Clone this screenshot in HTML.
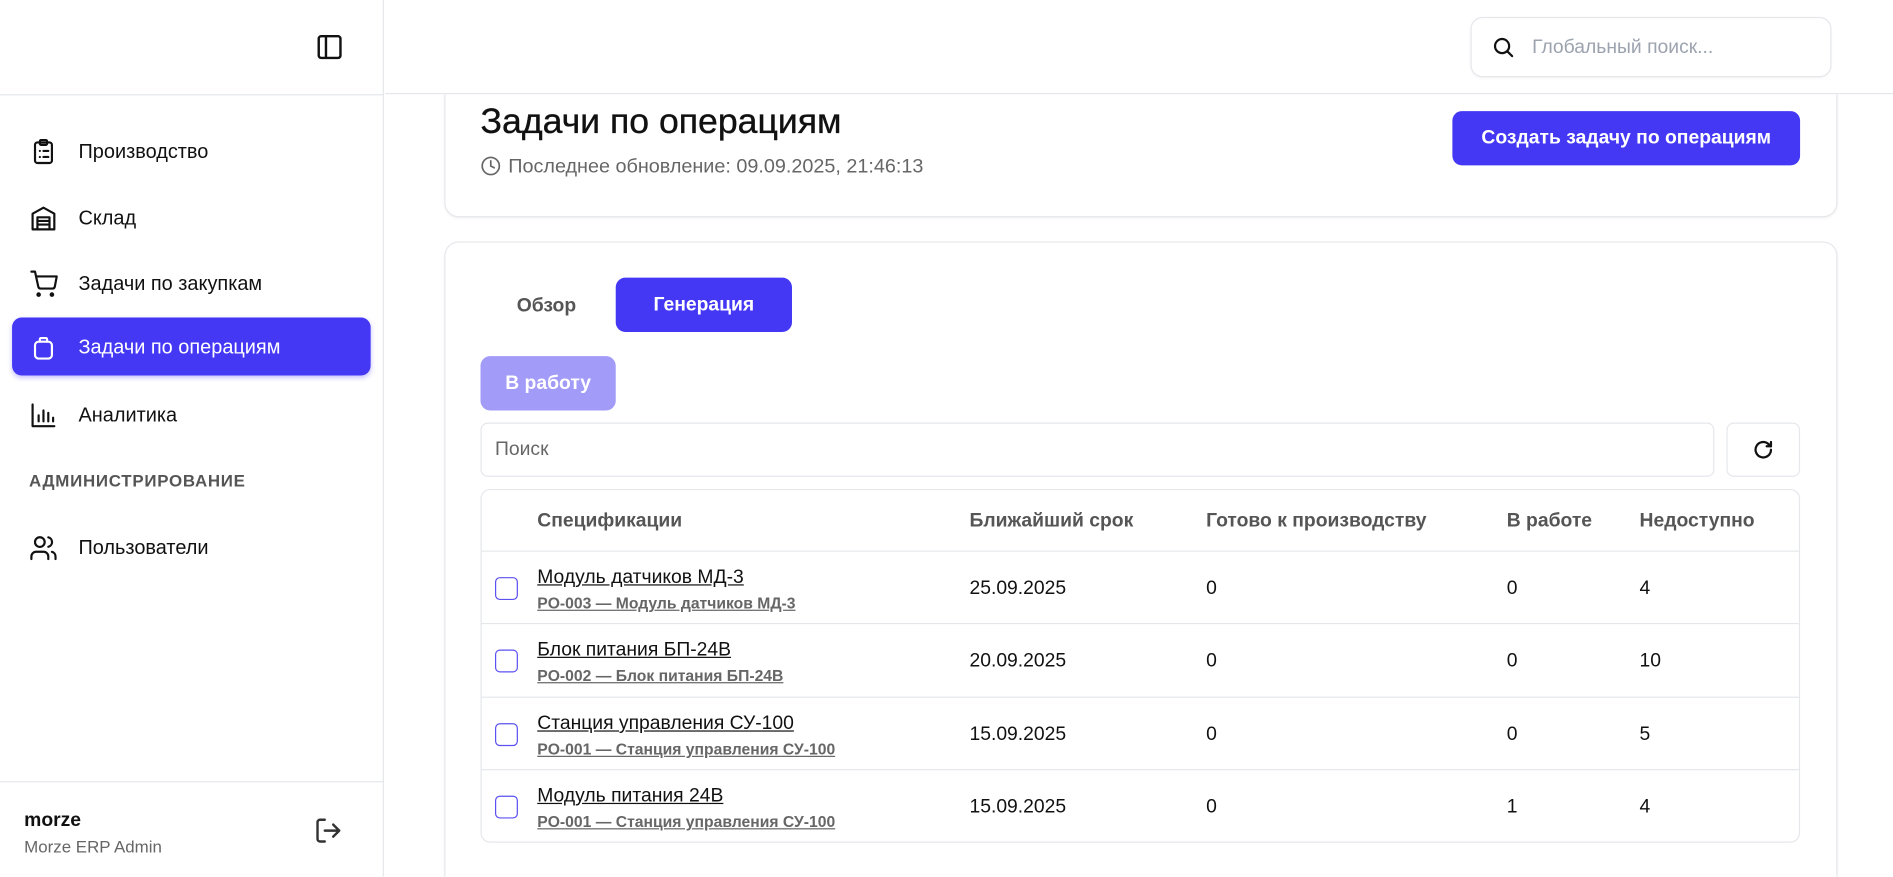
<!DOCTYPE html>
<html><head><meta charset="utf-8"><style>
*{box-sizing:border-box;margin:0;padding:0}
html,body{width:1893px;height:876px;overflow:hidden;background:#fff;font-family:"Liberation Sans","Noto Sans CJK SC",sans-serif;color:#111}
#w{position:absolute;left:0;top:0;width:1568px;height:726px;overflow:hidden;transform:scale(1.2073);transform-origin:0 0}
.a{position:absolute}
.side{left:0;top:0;width:318px;height:726px;border-right:1px solid #e5e7eb}
.nav{position:absolute;left:10px;width:297px;height:48px;border-radius:8px;display:flex;align-items:center;padding-left:14px;font-size:16.5px;color:#111;padding-top:2px}
.nav svg{width:24px;height:24px;margin-right:17px;fill:none;stroke:#111;stroke-width:1.8;stroke-linecap:round;stroke-linejoin:round}
.nav.act{background:#4438f5;color:#fff;box-shadow:0 2px 4px rgba(68,56,245,.3)}
.nav.act svg{stroke:#fff}
.card{border:1px solid #e5e7eb;border-radius:12px;background:#fff;box-shadow:0 1px 2px rgba(0,0,0,.04)}
.btn{border-radius:8px;color:#fff;font-weight:bold;font-size:16px;display:flex;align-items:center;justify-content:center}
.th{position:absolute;top:432px;transform:translateY(-50%);font-size:16px;font-weight:bold;color:#555}
.row{position:absolute;left:398px;width:1092px;border-top:1px solid #e5e7eb;height:60px}
.cb{position:absolute;left:12px;top:21px;width:19px;height:19px;border:1.5px solid #5b50f0;border-radius:4px}
.nm{position:absolute;left:47px;top:13px;font-size:16px;text-decoration:underline;color:#111}
.sub{position:absolute;left:47px;top:35px;font-size:13px;font-weight:bold;color:#666;text-decoration:underline}
.c{position:absolute;top:22px;font-size:16px;color:#111}
</style></head><body><div id="w">
<div class="a side"></div>
<div class="a" style="left:0;top:78px;width:318px;border-top:1px solid #e5e7eb"></div>
<svg class="a" style="left:261px;top:27px" width="24" height="24" viewBox="0 0 24 24" fill="none" stroke="#111" stroke-width="2"><rect x="3" y="3" width="18" height="18" rx="2"/><line x1="9" y1="3" x2="9" y2="21"/></svg>

<div class="nav" style="top:101px"><svg viewBox="0 0 24 24"><rect x="5" y="4" width="14" height="17" rx="2"/><rect x="9" y="2" width="6" height="4" rx="1"/><path d="M9 11h.01M12 11h4M9 16h.01M12 16h4"/></svg>Производство</div>
<div class="nav" style="top:156px"><svg viewBox="0 0 24 24"><path d="M3 21V8l9-5 9 5v13z"/><path d="M7 21V11h10v10M7 14h10M7 17h10"/></svg>Склад</div>
<div class="nav" style="top:210px"><svg viewBox="0 0 24 24"><circle cx="8" cy="21" r="1"/><circle cx="19" cy="21" r="1"/><path d="M2 2h3l2.7 12.4a2 2 0 0 0 2 1.6h9.7a2 2 0 0 0 2-1.6L23 6H6"/></svg>Задачи по закупкам</div>
<div class="nav act" style="top:263px"><svg viewBox="0 0 24 24"><rect x="5" y="7" width="14" height="14" rx="3"/><path d="M9 7V5a1 1 0 0 1 1-1h4a1 1 0 0 1 1 1v2"/></svg>Задачи по операциям</div>
<div class="nav" style="top:319px"><svg viewBox="0 0 24 24"><path d="M3 3v18h18M8 17v-5M12 17V8M16 17v-7M20 17v-3"/></svg>Аналитика</div>
<div class="a" style="left:24px;top:390px;font-size:14px;font-weight:bold;color:#555;letter-spacing:.6px">АДМИНИСТРИРОВАНИЕ</div>
<div class="nav" style="top:429px"><svg viewBox="0 0 24 24"><circle cx="9" cy="7" r="4"/><path d="M2 21v-2a4 4 0 0 1 4-4h6a4 4 0 0 1 4 4v2M16 3.1a4 4 0 0 1 0 7.8M22 21v-2a4 4 0 0 0-3-3.9"/></svg>Пользователи</div>
<div class="a" style="left:0;top:647px;width:318px;border-top:1px solid #e5e7eb"></div>
<div class="a" style="left:20px;top:671px;font-size:16px;font-weight:bold">morze</div>
<div class="a" style="left:20px;top:693px;font-size:14px;color:#666">Morze ERP Admin</div>
<svg class="a" style="left:260px;top:676px" width="24" height="24" viewBox="0 0 24 24" fill="none" stroke="#333" stroke-width="2" stroke-linecap="round" stroke-linejoin="round"><path d="M9 21H5a2 2 0 0 1-2-2V5a2 2 0 0 1 2-2h4M16 17l5-5-5-5M21 12H9"/></svg>

<div class="a card" style="left:368px;top:40px;width:1154px;height:140px"></div>
<div class="a" style="top:0;height:78px;background:#fff;border-bottom:1px solid #e5e7eb;left:319px;width:1249px"></div>
<div class="a card" style="left:1218px;top:14px;width:299px;height:50px;border-radius:10px"></div>
<svg class="a" style="left:1235px;top:29px" width="20" height="20" viewBox="0 0 24 24" fill="none" stroke="#111" stroke-width="2.2" stroke-linecap="round"><circle cx="11" cy="11" r="7"/><path d="M21 21l-4.3-4.3"/></svg>
<div class="a" style="left:1269px;top:31px;font-size:16px;color:#9ca3af">Глобальный поиск...</div>

<div class="a" style="left:398px;top:84px;font-size:29.5px;color:#111;-webkit-text-stroke:.3px #111">Задачи по операциям</div>
<svg class="a" style="left:398px;top:129px" width="17" height="17" viewBox="0 0 24 24" fill="none" stroke="#666" stroke-width="2" stroke-linecap="round"><circle cx="12" cy="12" r="10"/><path d="M12 6v6l4 2"/></svg>
<div class="a" style="left:421px;top:129px;font-size:16.4px;color:#666">Последнее обновление: 09.09.2025, 21:46:13</div>
<div class="a btn" style="left:1203px;top:92px;width:288px;height:45px;background:#4438f5">Создать задачу по операциям</div>

<div class="a card" style="left:368px;top:200px;width:1154px;height:560px"></div>
<div class="a" style="left:428px;top:245px;font-size:16px;font-weight:bold;color:#555">Обзор</div>
<div class="a btn" style="left:510px;top:230px;width:146px;height:45px;background:#4438f5">Генерация</div>
<div class="a btn" style="left:398px;top:295px;width:112px;height:45px;background:#a29bf8">В работу</div>
<div class="a" style="left:398px;top:350px;width:1022px;height:45px;border:1px solid #e5e7eb;border-radius:6px"></div>
<div class="a" style="left:410px;top:364px;font-size:16px;color:#666">Поиск</div>
<div class="a" style="left:1430px;top:350px;width:61px;height:45px;border:1px solid #e5e7eb;border-radius:6px"></div>
<svg class="a" style="left:1452px;top:364px" width="17" height="17" viewBox="0 0 24 24" fill="none" stroke="#111" stroke-width="2.6" stroke-linecap="round" stroke-linejoin="round"><path d="M21 12a9 9 0 1 1-3-6.7L21 8"/><path d="M21 3v5h-5"/></svg>

<div class="a" style="left:398px;top:405px;width:1093px;height:293px;border:1px solid #e5e7eb;border-radius:8px"></div>
<div class="th" style="left:445px">Спецификации</div>
<div class="th" style="left:803px">Ближайший срок</div>
<div class="th" style="left:999px">Готово к производству</div>
<div class="th" style="left:1248px">В работе</div>
<div class="th" style="left:1358px">Недоступно</div>

<div class="row" style="top:456px"><div class="cb"></div><div class="nm">Модуль датчиков МД-3</div><div class="sub">PO-003 — Модуль датчиков МД-3</div><div class="c" style="left:405px">25.09.2025</div><div class="c" style="left:601px">0</div><div class="c" style="left:850px">0</div><div class="c" style="left:960px">4</div></div>
<div class="row" style="top:516px"><div class="cb"></div><div class="nm">Блок питания БП-24В</div><div class="sub">PO-002 — Блок питания БП-24В</div><div class="c" style="left:405px">20.09.2025</div><div class="c" style="left:601px">0</div><div class="c" style="left:850px">0</div><div class="c" style="left:960px">10</div></div>
<div class="row" style="top:577px"><div class="cb"></div><div class="nm">Станция управления СУ-100</div><div class="sub">PO-001 — Станция управления СУ-100</div><div class="c" style="left:405px">15.09.2025</div><div class="c" style="left:601px">0</div><div class="c" style="left:850px">0</div><div class="c" style="left:960px">5</div></div>
<div class="row" style="top:637px"><div class="cb"></div><div class="nm">Модуль питания 24В</div><div class="sub">PO-001 — Станция управления СУ-100</div><div class="c" style="left:405px">15.09.2025</div><div class="c" style="left:601px">0</div><div class="c" style="left:850px">1</div><div class="c" style="left:960px">4</div></div>
</div></body></html>
